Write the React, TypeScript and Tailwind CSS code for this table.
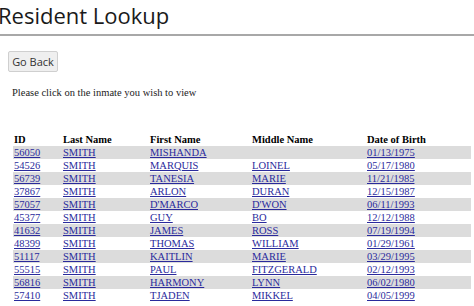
import React from 'react';

type Resident = {
    id: string;
    last: string;
    first: string;
    middle: string;
    dob: string;
};

const residents: Resident[] = [
    { id: '56050', last: 'SMITH', first: 'MISHANDA', middle: '', dob: '01/13/1975' },
    { id: '54526', last: 'SMITH', first: 'MARQUIS', middle: 'LOINEL', dob: '05/17/1980' },
    { id: '56739', last: 'SMITH', first: 'TANESIA', middle: 'MARIE', dob: '11/21/1985' },
    { id: '37867', last: 'SMITH', first: 'ARLON', middle: 'DURAN', dob: '12/15/1987' },
    { id: '57057', last: 'SMITH', first: "D'MARCO", middle: "D'WON", dob: '06/11/1993' },
    { id: '45377', last: 'SMITH', first: 'GUY', middle: 'BO', dob: '12/12/1988' },
    { id: '41632', last: 'SMITH', first: 'JAMES', middle: 'ROSS', dob: '07/19/1994' },
    { id: '48399', last: 'SMITH', first: 'THOMAS', middle: 'WILLIAM', dob: '01/29/1961' },
    { id: '51117', last: 'SMITH', first: 'KAITLIN', middle: 'MARIE', dob: '03/29/1995' },
    { id: '55515', last: 'SMITH', first: 'PAUL', middle: 'FITZGERALD', dob: '02/12/1993' },
    { id: '56816', last: 'SMITH', first: 'HARMONY', middle: 'LYNN', dob: '06/02/1980' },
    { id: '57410', last: 'SMITH', first: 'TJADEN', middle: 'MIKKEL', dob: '04/05/1999' },
];

const linkCls = 'text-[#2a2a9c] underline';

const App: React.FC = () => {
    return (
        <div className="w-[474px] h-[306px] overflow-hidden bg-white font-['Liberation_Serif',serif] text-black">
            {/* Title */}
            <h1 className="-ml-[2px] h-[34px] text-[22px] leading-[30px] text-[#1a1a1a] font-['Open_Sans',sans-serif]">
                Resident Lookup
            </h1>
            <div className="h-[2px] bg-[#a8a8a8]" />

            <div className="flex pl-[8px] pt-[15px]">
                <button
                    type="button"
                    className="w-[50px] h-[21px] bg-[#efefef] border border-[#cfcfcf] rounded-[2px] text-[11px] text-[#333] font-['Open_Sans',sans-serif] leading-none"
                >
                    Go Back
                </button>
            </div>

            <p className="pl-[12px] mt-[14px] text-[10.5px] leading-[13px] text-[#222]">
                Please click on the inmate you wish to view
            </p>

            {/* Results */}
            <table className="ml-[13px] mt-[34px] w-[458px] table-fixed border-collapse text-[10.5px] leading-[13px]">
                <colgroup>
                    <col className="w-[50px]" />
                    <col className="w-[87px]" />
                    <col className="w-[102px]" />
                    <col className="w-[115px]" />
                    <col className="w-[104px]" />
                </colgroup>
                <thead>
                    <tr className="h-[13px] text-left font-bold">
                        <th className="pl-[1px] p-0">ID</th>
                        <th className="p-0">Last Name</th>
                        <th className="p-0">First Name</th>
                        <th className="p-0">Middle Name</th>
                        <th className="p-0">Date of Birth</th>
                    </tr>
                </thead>
                <tbody>
                    {residents.map((r, i) => (
                        <tr key={r.id} className={i % 2 === 0 ? 'h-[13px] bg-[#dcdcdc]' : 'h-[13px]'}>
                            <td className="pl-[1px] p-0"><a href="#" className={linkCls}>{r.id}</a></td>
                            <td className="p-0"><a href="#" className={linkCls}>{r.last}</a></td>
                            <td className="p-0"><a href="#" className={linkCls}>{r.first}</a></td>
                            <td className="p-0">{r.middle && <a href="#" className={linkCls}>{r.middle}</a>}</td>
                            <td className="p-0"><a href="#" className={linkCls}>{r.dob}</a></td>
                        </tr>
                    ))}
                </tbody>
            </table>
        </div>
    );
};

export default App;
